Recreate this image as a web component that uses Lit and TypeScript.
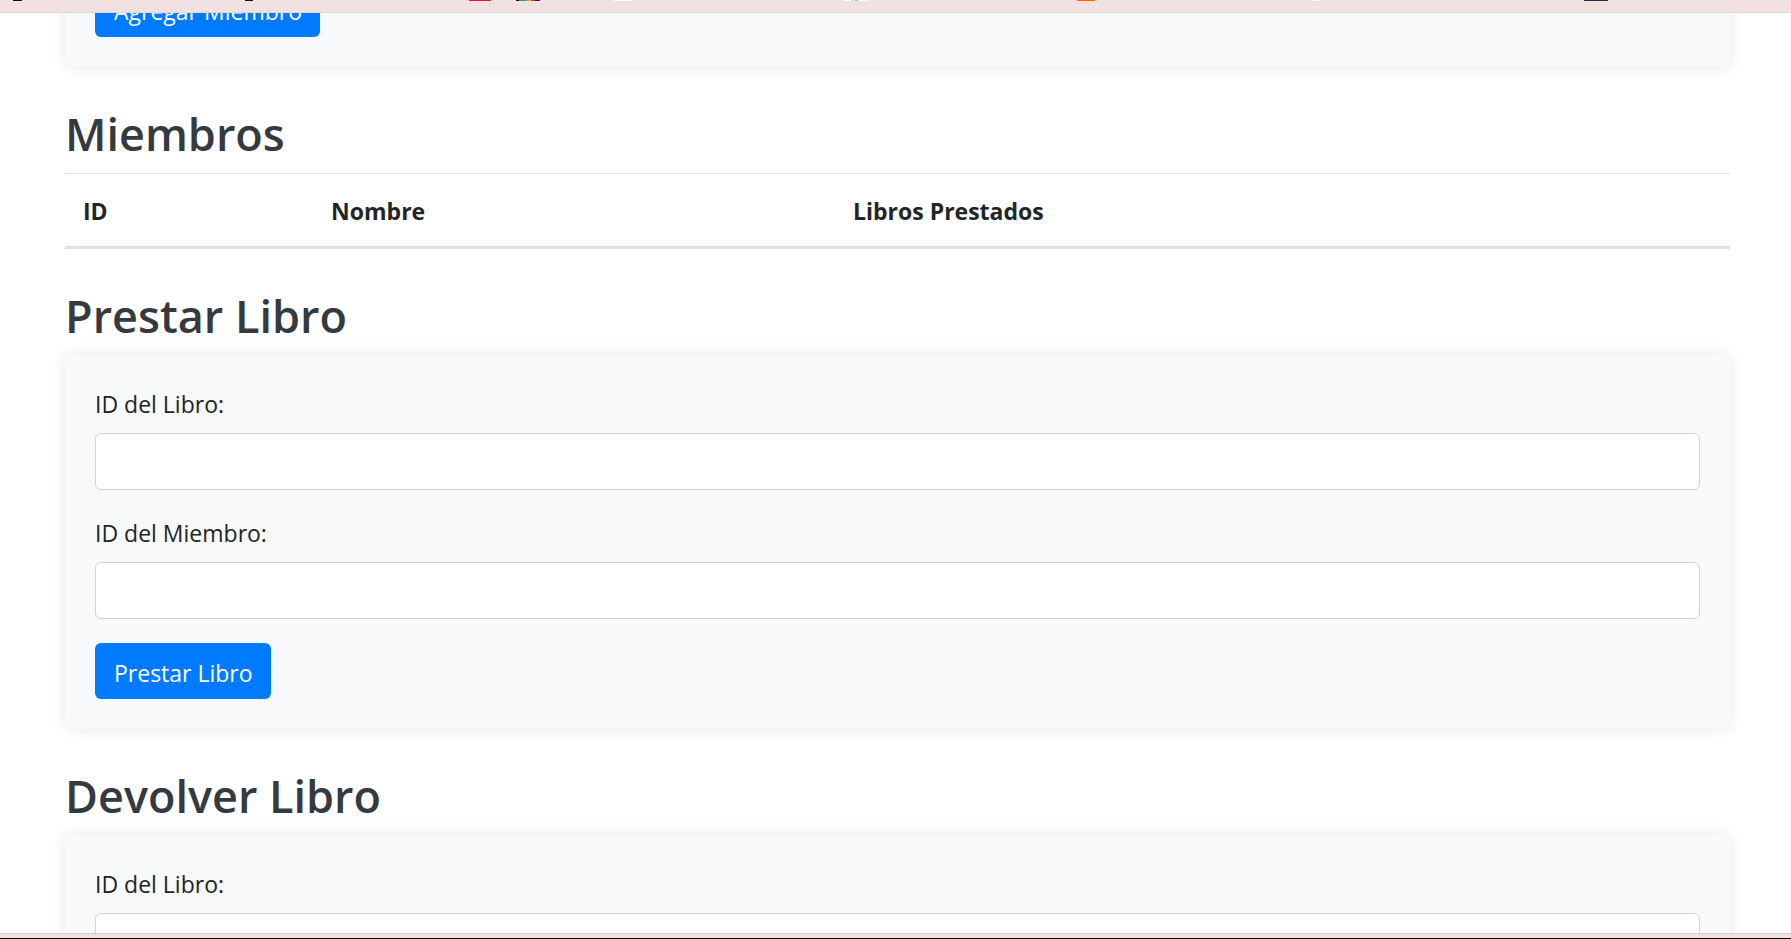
import { LitElement, html, css, svg } from "lit";
import { customElement } from "lit/decorators.js";

/** Lower edges of the bookmark icons: [x, width, colour]. */
const BOOKMARKS: Array<[number, number, string]> = [
  [13, 9, "#111111"],
  [245, 8, "#111111"],
  [469, 22, "#e8173f"],
  [516, 3, "#101018"],
  [519, 4, "#1090d0"],
  [523, 4, "#50a030"],
  [527, 4, "#f0b000"],
  [531, 4, "#e03010"],
  [535, 5, "#401060"],
  [614, 19, "#ffffff"],
  [843, 24, "#ffffff"],
  [851, 3, "#b8dcec"],
  [855, 3, "#8cc8e4"],
  [1077, 18, "#ff6600"],
  [1313, 8, "#ffffff"],
  [1584, 24, "#2b2d3a"],
];

@customElement("app-root")
export class AppRoot extends LitElement {
  static styles = css`
    :host {
      display: flex;
      flex-direction: column;
      height: 100vh;
      overflow: hidden;
      box-sizing: border-box;
      border-bottom: 1px solid #000;
      background: #fff;
      color: #212529;
      font-family: "Segoe UI", "Open Sans", sans-serif;
      font-size: 23px;
      line-height: 36px;
    }
    *, *::before, *::after { box-sizing: border-box; }
    .bookmarks {
      flex: none;
      height: 13px;
      background: #f1e2e1;
      border-bottom: 1px solid #e5d6d5;
    }
    .bookmarks svg { display: block; }
    .status {
      flex: none;
      height: 5px;
      background: #f1e2e1;
      border-top: 1px solid #d8cccb;
    }
    .page {
      flex: 1;
      min-height: 0;
      overflow: hidden;
      padding: 0 61px 0 65px;
    }
    .scrolled { margin-top: -62px; }
    h2 {
      margin: 36px 0 8px;
      color: #343a40;
      font-size: 45px;
      font-weight: 600;
      line-height: 62px;
    }
    .card {
      padding: 30px;
      border-radius: 8px;
      background: #f8f9fa;
      box-shadow: 0 0 15px rgba(0, 0, 0, 0.1);
    }
    .group { margin-bottom: 24px; }
    label { display: block; margin-bottom: 10px; line-height: 38px; }
    input {
      display: block;
      width: 100%;
      height: 57px;
      padding: 9px 18px;
      border: 1px solid #ced4da;
      border-radius: 6px;
      background: #fff;
      color: #495057;
      font: inherit;
    }
    button {
      display: block;
      height: 56px;
      padding: 3px 18px 0 19px;
      border: 0;
      border-radius: 6px;
      background: #007bff;
      color: #fff;
      font: inherit;
      cursor: pointer;
    }
    table {
      width: 100%;
      border-collapse: separate;
      border-spacing: 0;
      table-layout: fixed;
    }
    th {
      padding: 19px 18px 17px;
      border-top: 1px solid #dee2e6;
      border-bottom: 3px solid #dee2e6;
      text-align: left;
      font-weight: 700;
    }
    .col-id { width: 14.9%; }
    .col-name { width: 31.35%; }
  `;

  private field(id: string, label: string) {
    return html`<div class="group">
      <label for=${id}>${label}</label>
      <input id=${id} type="text" />
    </div>`;
  }

  render() {
    return html`
      <div class="bookmarks">
        <svg width="100%" height="1" aria-hidden="true">
          ${BOOKMARKS.map(([x, w, c]) => svg`<rect x=${x} y="0" width=${w} height="1" fill=${c} />`)}
        </svg>
      </div>
      <main class="page">
        <form class="card scrolled">
          <button type="button">Agregar Miembro</button>
        </form>

        <h2>Miembros</h2>
        <table>
          <thead>
            <tr>
              <th class="col-id" scope="col">ID</th>
              <th class="col-name" scope="col">Nombre</th>
              <th scope="col">Libros Prestados</th>
            </tr>
          </thead>
          <tbody></tbody>
        </table>

        <h2>Prestar Libro</h2>
        <form class="card">
          ${this.field("prestar-libro", "ID del Libro:")}
          ${this.field("prestar-miembro", "ID del Miembro:")}
          <button type="button">Prestar Libro</button>
        </form>

        <h2>Devolver Libro</h2>
        <form class="card">
          ${this.field("devolver-libro", "ID del Libro:")}
        </form>
      </main>
      <div class="status"></div>
    `;
  }
}
